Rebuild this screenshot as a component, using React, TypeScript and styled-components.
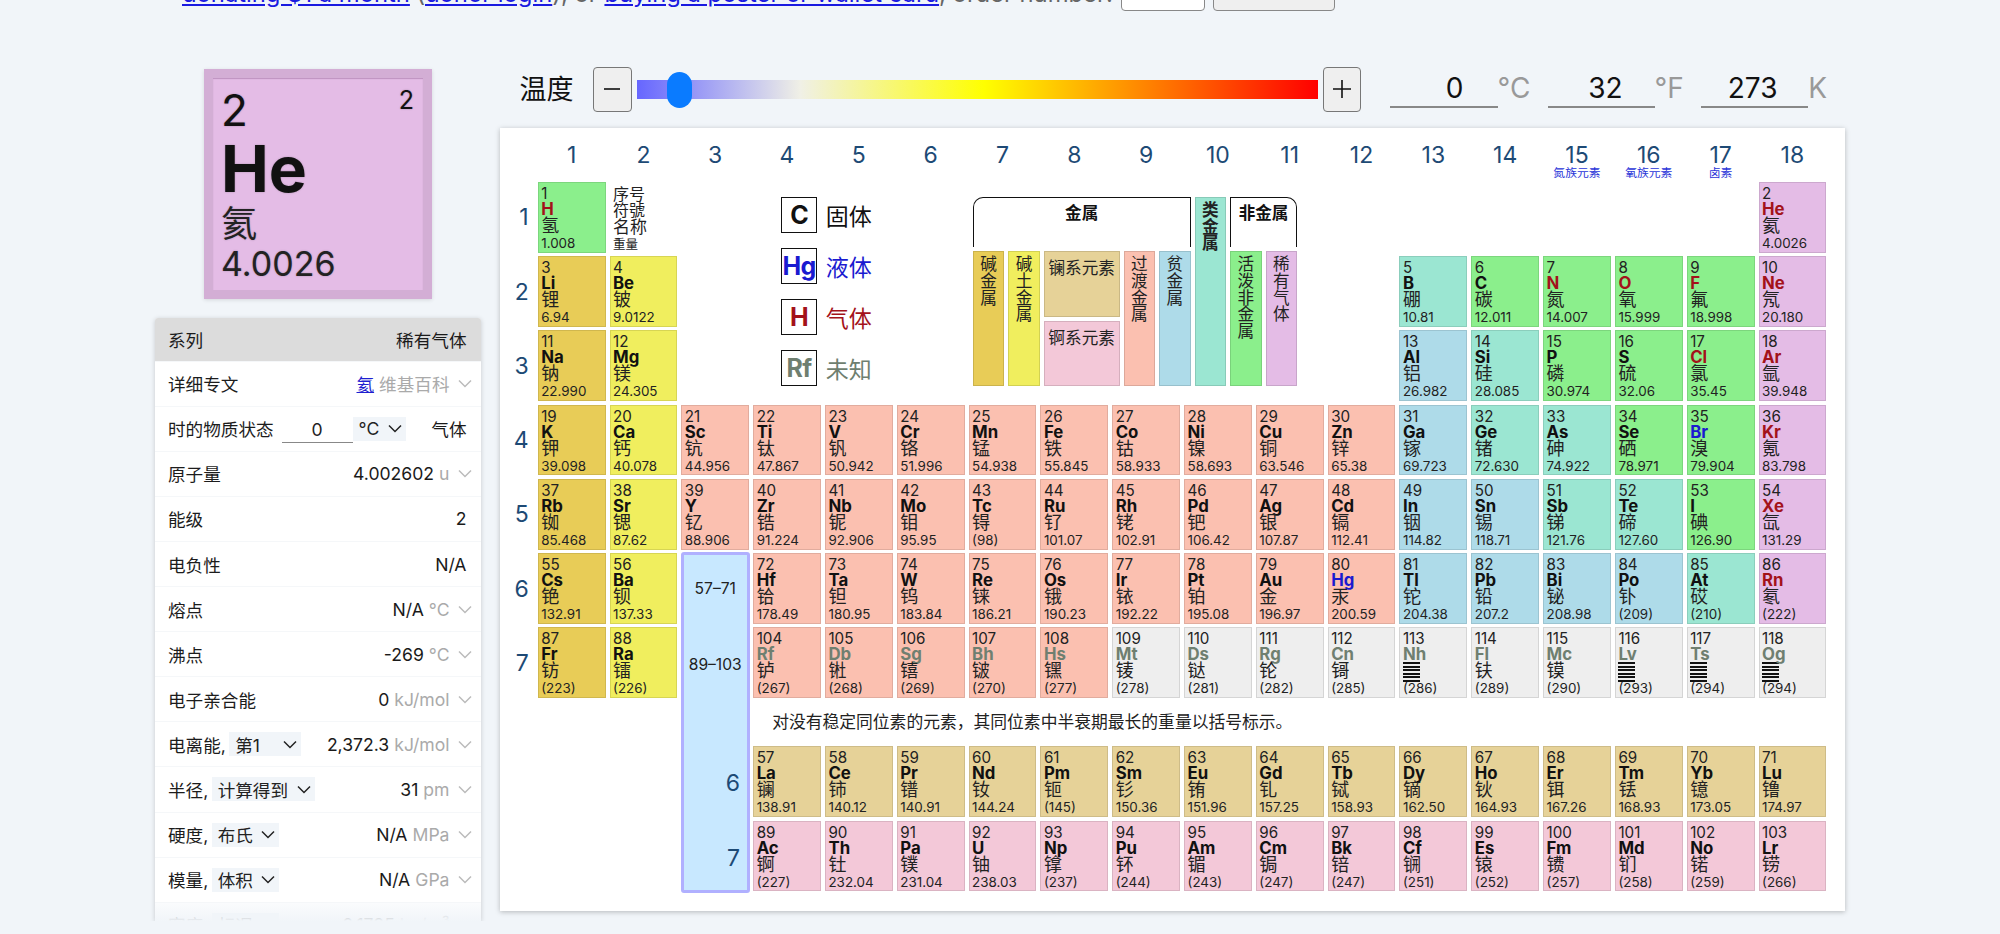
import { createGlobalStyle } from "styled-components";
import styled from "styled-components";

const GlobalStyle = createGlobalStyle`
  html, body {
    margin: 0;
    height: 934px;
    overflow: hidden;
    background: #f1f5f9;
    font-family: Inter, "Noto Sans CJK SC", sans-serif;
    color: #111;
  }
`;

const CAT: Record<string, { bg: string }> = {
  alkali: { bg: "#e8cc57" },
  earth: { bg: "#f0ee5e" },
  trans: { bg: "#fbc0b0" },
  post: { bg: "#aedbe9" },
  metalloid: { bg: "#9be6d2" },
  nonmetal: { bg: "#8bef8c" },
  noble: { bg: "#e4bce6" },
  lan: { bg: "#e6d298" },
  act: { bg: "#f3c8d8" },
  unknown: { bg: "#eeeeee" },
};

const RAW = `H 氢 1.008|He 氦 4.0026|Li 锂 6.94|Be 铍 9.0122|B 硼 10.81|C 碳 12.011|N 氮 14.007|O 氧 15.999|F 氟 18.998|Ne 氖 20.180|Na 钠 22.990|Mg 镁 24.305|Al 铝 26.982|Si 硅 28.085|P 磷 30.974|S 硫 32.06|Cl 氯 35.45|Ar 氩 39.948|K 钾 39.098|Ca 钙 40.078|Sc 钪 44.956|Ti 钛 47.867|V 钒 50.942|Cr 铬 51.996|Mn 锰 54.938|Fe 铁 55.845|Co 钴 58.933|Ni 镍 58.693|Cu 铜 63.546|Zn 锌 65.38|Ga 镓 69.723|Ge 锗 72.630|As 砷 74.922|Se 硒 78.971|Br 溴 79.904|Kr 氪 83.798|Rb 铷 85.468|Sr 锶 87.62|Y 钇 88.906|Zr 锆 91.224|Nb 铌 92.906|Mo 钼 95.95|Tc 锝 (98)|Ru 钌 101.07|Rh 铑 102.91|Pd 钯 106.42|Ag 银 107.87|Cd 镉 112.41|In 铟 114.82|Sn 锡 118.71|Sb 锑 121.76|Te 碲 127.60|I 碘 126.90|Xe 氙 131.29|Cs 铯 132.91|Ba 钡 137.33|La 镧 138.91|Ce 铈 140.12|Pr 镨 140.91|Nd 钕 144.24|Pm 钷 (145)|Sm 钐 150.36|Eu 铕 151.96|Gd 钆 157.25|Tb 铽 158.93|Dy 镝 162.50|Ho 钬 164.93|Er 铒 167.26|Tm 铥 168.93|Yb 镱 173.05|Lu 镥 174.97|Hf 铪 178.49|Ta 钽 180.95|W 钨 183.84|Re 铼 186.21|Os 锇 190.23|Ir 铱 192.22|Pt 铂 195.08|Au 金 196.97|Hg 汞 200.59|Tl 铊 204.38|Pb 铅 207.2|Bi 铋 208.98|Po 钋 (209)|At 砹 (210)|Rn 氡 (222)|Fr 钫 (223)|Ra 镭 (226)|Ac 锕 (227)|Th 钍 232.04|Pa 镤 231.04|U 铀 238.03|Np 镎 (237)|Pu 钚 (244)|Am 镅 (243)|Cm 锔 (247)|Bk 锫 (247)|Cf 锎 (251)|Es 锿 (252)|Fm 镄 (257)|Md 钔 (258)|No 锘 (259)|Lr 铹 (266)|Rf 𬬻 (267)|Db 𬭊 (268)|Sg 𬭳 (269)|Bh 𬭛 (270)|Hs 𬭶 (277)|Mt 鿏 (278)|Ds 𫟼 (281)|Rg 𬬭 (282)|Cn 鿔 (285)|Nh - (286)|Fl 𫓧 (289)|Mc 镆 (290)|Lv - (293)|Ts - (294)|Og - (294)`;

const groupOf = (list: string, sym: string) => list.split(" ").includes(sym);

function category(n: number, sym: string) {
  if (n >= 57 && n <= 71) return "lan";
  if (n >= 89 && n <= 103) return "act";
  if (n >= 109) return "unknown";
  if (groupOf("Li Na K Rb Cs Fr", sym)) return "alkali";
  if (groupOf("Be Mg Ca Sr Ba Ra", sym)) return "earth";
  if (groupOf("Al Ga In Sn Tl Pb Bi Po", sym)) return "post";
  if (groupOf("B Si Ge As Sb Te At", sym)) return "metalloid";
  if (groupOf("H C N O F P S Cl Se Br I", sym)) return "nonmetal";
  if (groupOf("He Ne Ar Kr Xe Rn", sym)) return "noble";
  return "trans";
}

function symbolColor(n: number, sym: string) {
  if (n >= 104) return "#6f7f70";
  if (groupOf("H He N O F Ne Cl Ar Kr Xe Rn", sym)) return "#a3121a";
  if (groupOf("Br Hg", sym)) return "#1a1ad0";
  return "#111";
}

// [row, col] in the table, row 8/9 are the two f-block rows under the note
function place(n: number): [number, number] {
  if (n === 1) return [1, 1];
  if (n === 2) return [1, 18];
  if (n <= 4) return [2, n - 2];
  if (n <= 10) return [2, n + 8];
  if (n <= 12) return [3, n - 10];
  if (n <= 18) return [3, n];
  if (n <= 36) return [4, n - 18];
  if (n <= 54) return [5, n - 36];
  if (n <= 56) return [6, n - 54];
  if (n <= 71) return [8, n - 53];
  if (n <= 86) return [6, n - 68];
  if (n <= 88) return [7, n - 86];
  if (n <= 103) return [9, n - 85];
  return [7, n - 100];
}

const ELEMENTS = RAW.split("|").map((s, i) => {
  const [sym, name, weight] = s.split(" ");
  const n = i + 1;
  return { n, sym, name, weight, cat: category(n, sym), pos: place(n), color: symbolColor(n, sym) };
});

const GROUP_NOTES: Record<number, string> = { 15: "氮族元素", 16: "氧族元素", 17: "卤素" };

const TopBar = styled.div`
  height: 12px;
  overflow: hidden;
  display: flex;
  align-items: flex-end;
  padding-left: 182px;
  font-size: 23.8px;
  line-height: 28px;
  color: #666;
  white-space: pre;
  a { color: #1a1ae0; text-decoration: underline; }
`;

const TopText = styled.span`
  margin-bottom: 4px;
`;

const TopInput = styled.span`
  flex: none;
  width: 84.5px;
  height: 40px;
  margin: 0 8px 1.5px 8px;
  border: 1px solid #888;
  border-radius: 4px;
  background: #fff;
  box-sizing: border-box;
`;

const TopButton = styled.span`
  flex: none;
  width: 122px;
  height: 40px;
  margin-bottom: 1px;
  padding-top: 4px;
  box-sizing: border-box;
  border: 1.5px solid #888;
  border-radius: 4px;
  background: #efefef;
  color: #111;
  font-size: 20px;
  line-height: 24px;
  text-align: center;
`;

const Main = styled.div`
  display: flex;
  gap: 19px;
  padding: 55px 0 0 155px;
  box-sizing: border-box;
`;

const Side = styled.div`
  width: 326px;
  display: flex;
  flex-direction: column;
  align-items: center;
  gap: 19px;
  padding-top: 2px;
`;

const Tile = styled.div`
  width: 228px;
  height: 230px;
  box-sizing: border-box;
  padding: 9.5px 18px 0 17px;
  background: #e4bce6;
  border: 9px solid #d3aed5;
  box-shadow: inset 0 1px 1px rgba(120, 70, 120, 0.35), 0 1px 4px rgba(0, 0, 0, 0.12);
  position: relative;
  text-shadow: 0 0 2px rgba(0, 0, 0, 0.25);
`;

const TileShell = styled.div`
  font-size: 44px;
  line-height: 44px;
  height: 44px;
  margin-left: -9px;
`;

const TileShells = styled.span`
  position: absolute;
  top: 7px;
  right: 9px;
  font-size: 25px;
  line-height: 30px;
`;

const TileSymbol = styled.div`
  font-size: 64px;
  font-weight: 700;
  line-height: 73px;
  margin-left: -9px;
`;

const TileName = styled.div`
  font-size: 36px;
  line-height: 39.5px;
  margin-left: -9px;
  color: #222;
`;

const TileWeight = styled.div`
  font-size: 34px;
  line-height: 40px;
  margin-left: -9px;
  color: #222;
`;

const Panel = styled.div`
  width: 326px;
  height: 603px;
  overflow: hidden;
  position: relative;
  background: #fff;
  border-radius: 3px 3px 0 0;
  box-shadow: 0 1px 5px rgba(0, 0, 0, 0.18);
  clip-path: inset(-8px -8px 0 -8px);
  font-size: 17.6px;
  &::after {
    content: "";
    position: absolute;
    left: -2px;
    right: -2px;
    bottom: 0;
    height: 18px;
    background: linear-gradient(rgba(241, 245, 249, 0.35), #f1f5f9 100%);
  }
`;

const Row = styled.div<{ $head?: boolean }>`
  height: ${(p) => (p.$head ? "43.6px" : "45.1px")};
  box-sizing: border-box;
  display: flex;
  align-items: center;
  justify-content: space-between;
  padding: 0 14.5px 0 13px;
  white-space: nowrap;
  background: ${(p) => (p.$head ? "#dcdcdc" : "#fff")};
  border-bottom: 1.5px solid #f5f7f9;
`;

const Label = styled.span`
  display: flex;
  align-items: center;
  color: #1c1c1c;
`;

const Value = styled.span`
  display: flex;
  align-items: center;
  gap: 5px;
  color: #1a1a1a;
`;

const Unit = styled.span`
  color: #aaa;
`;

const ChevronSvg = styled.svg<{ $dark?: boolean }>`
  width: 14px;
  height: 9px;
  flex: none;
  fill: none;
  stroke: ${(p) => (p.$dark ? "#222" : "#bbb")};
  stroke-width: 1.5;
`;

const Chevron = ({ dark }: { dark?: boolean }) => (
  <ChevronSvg $dark={dark} viewBox="0 0 14 9">
    <polyline points="1,1.5 7,7.5 13,1.5" />
  </ChevronSvg>
);

const MoreIcon = styled.span`
  display: flex;
  margin: 0 -5px 0 3px;
`;

const Link = styled.a`
  color: #1f1fd0;
  text-decoration: underline;
`;

const Pick = styled.span<{ $w: number }>`
  display: inline-flex;
  align-items: center;
  justify-content: space-between;
  width: ${(p) => p.$w}px;
  height: 24px;
  margin-left: 3.4px;
  box-sizing: border-box;
  padding: 0 4px 0 6px;
  background: #f1f5f9;
  color: #222;
`;

const SmallInput = styled.input`
  width: 71px;
  height: 26px;
  margin: 2px -3.4px 0 8px;
  padding: 0;
  box-sizing: border-box;
  border: 0;
  border-bottom: 1.5px solid #888;
  background: transparent;
  text-align: center;
  font: inherit;
  color: #222;
`;

const Content = styled.div`
  width: 1345px;
`;

const Controls = styled.div`
  height: 61px;
  display: flex;
  align-items: flex-start;
`;

const TempLabel = styled.span`
  width: 93px;
  box-sizing: border-box;
  padding-left: 19.5px;
  font-size: 27px;
  line-height: 45px;
`;

const StepButton = styled.button`
  width: 38.5px;
  height: 44.7px;
  padding: 0;
  box-sizing: border-box;
  display: flex;
  align-items: center;
  justify-content: center;
  border: 1.5px solid #777;
  border-radius: 4px;
  background: #efefef;
  color: #111;
`;

const Track = styled.div`
  width: 681px;
  height: 19px;
  margin: 13px 5px 0 5px;
  position: relative;
  background: linear-gradient(90deg, #6666ff 0%, #f0f0e6 24%, #ffff00 51%, #ff0000 100%);
`;

const Thumb = styled.div`
  position: absolute;
  left: 30px;
  top: -8.5px;
  width: 25px;
  height: 36px;
  border-radius: 12.5px;
  background: #0a7bff;
`;

const Temp = styled.div`
  display: flex;
  align-items: flex-start;
  margin-left: 28.5px;
`;

const TempField = styled.label<{ $w: number }>`
  width: ${(p) => p.$w}px;
  display: flex;
  align-items: flex-start;
  font-size: 28px;
  line-height: 36px;
  color: #999;
`;

const TempInput = styled.input<{ $w: number; $shift: number }>`
  width: ${(p) => p.$w}px;
  height: 40.5px;
  padding: 4px ${(p) => Math.max(-p.$shift, 0)}px 0 ${(p) => Math.max(p.$shift, 0)}px;
  box-sizing: border-box;
  border: 0;
  border-bottom: 2px solid #888;
  background: transparent;
  text-align: center;
  font: inherit;
  color: #111;
`;

const TempUnit = styled.span`
  line-height: 42px;
`;

const Card = styled.div`
  height: 783px;
  box-sizing: border-box;
  background: #fff;
  box-shadow: 0 1px 5px rgba(0, 0, 0, 0.25);
  display: grid;
  grid-template-columns: 33.7px repeat(18, 67.82px);
  grid-template-rows: 50.45px repeat(7, 70.7px) 41.3px 70.7px 70.7px;
  gap: 3.55px 4px;
`;

const GroupHead = styled.div<{ $col: number }>`
  grid-column: ${(p) => p.$col + 1};
  grid-row: 1;
  padding-top: 15px;
  text-align: center;
  font-size: 23px;
  line-height: 24px;
  color: #1d4a75;
`;

const GroupNote = styled.div`
  font-size: 11.8px;
  line-height: 12px;
  color: #2a35d8;
  white-space: nowrap;
`;

const Period = styled.div<{ $row: number }>`
  grid-column: 1;
  grid-row: ${(p) => p.$row + 1};
  display: flex;
  align-items: center;
  justify-content: flex-end;
  padding-right: 5px;
  font-size: 23px;
  color: #1d4a75;
`;

const Cell = styled.div<{ $row: number; $col: number; $bg: string }>`
  grid-row: ${(p) => (p.$row > 7 ? p.$row + 2 : p.$row + 1)};
  grid-column: ${(p) => p.$col + 1};
  box-sizing: border-box;
  padding: 3px 0 0 2.5px;
  background: ${(p) => p.$bg};
  border: 1.5px solid rgba(0, 0, 0, 0.1);
  overflow: hidden;
  color: #222;
`;

const Num = styled.div`
  font-size: 15.2px;
  line-height: 15px;
`;

const Sym = styled.div<{ $color: string }>`
  font-size: 16.8px;
  font-weight: 700;
  line-height: 16px;
  color: ${(p) => p.$color};
`;

const Name = styled.div`
  font-size: 18px;
  line-height: 18px;
`;

const Weight = styled.div`
  font-size: 13.4px;
  line-height: 16px;
  white-space: nowrap;
`;

const Bars = styled.div`
  width: 17px;
  height: 21px;
  margin-bottom: -3px;
  background: repeating-linear-gradient(#111 0 2px, transparent 2px 3.5px);
`;

const KeyCell = styled.div`
  grid-row: 2;
  grid-column: 3;
  padding: 5px 0 0 3.5px;
  color: #222;
`;

const KeyLine = styled.div<{ $size: number; $lh: number }>`
  font-size: ${(p) => p.$size}px;
  line-height: ${(p) => p.$lh}px;
`;

const StateLegend = styled.div`
  grid-row: 2 / 5;
  grid-column: 5 / 7;
  display: flex;
  flex-direction: column;
  gap: 15px;
  padding: 15px 0 0 28px;
`;

const StateRow = styled.div<{ $color: string }>`
  display: flex;
  align-items: center;
  gap: 8.5px;
  font-size: 23px;
  color: ${(p) => p.$color};
`;

const StateBox = styled.span`
  width: 36px;
  height: 36px;
  box-sizing: border-box;
  display: flex;
  align-items: center;
  justify-content: center;
  border: 1.5px solid #111;
  font-size: 25px;
  font-weight: 700;
  letter-spacing: -0.5px;
`;

const CatLegend = styled.div`
  grid-row: 2 / 5;
  grid-column: 8 / 14;
  margin: 15px 0 15px 4.3px;
  width: 324px;
  display: grid;
  grid-template-columns: 31.5px 31.5px 75.7px 31.5px 31.5px 31.5px 31.5px 31.5px;
  grid-template-rows: 50.3px 65.4px 65px;
  gap: 4px;
  font-size: 16.6px;
  line-height: 16.7px;
  color: #222;
`;

const Bracket = styled.div<{ $col: string; $side: "left" | "right" }>`
  grid-column: ${(p) => p.$col};
  grid-row: 1;
  box-sizing: border-box;
  border: 1.5px solid #111;
  border-bottom: 0;
  border-${(p) => (p.$side === "left" ? "top-left" : "top-right")}-radius: 10px;
  text-align: center;
  font-weight: 700;
  padding-top: 7px;
  color: #111;
`;

const CatBox = styled.div<{ $col: string; $row: string; $bg: string; $flat?: boolean }>`
  grid-column: ${(p) => p.$col};
  grid-row: ${(p) => p.$row};
  box-sizing: border-box;
  padding: ${(p) => (p.$flat ? "8px 0 0" : "4px 0 0")};
  background: ${(p) => p.$bg};
  border: 1.5px solid rgba(0, 0, 0, 0.12);
  display: flex;
  flex-direction: column;
  align-items: center;
  text-align: center;
  overflow: hidden;
`;

const Stack = styled.span<{ $bold?: boolean }>`
  width: 1em;
  font-weight: ${(p) => (p.$bold ? 700 : 400)};
`;

const Note = styled.div`
  grid-row: 9;
  grid-column: 5 / 20;
  padding: 8px 0 0 19px;
  font-size: 16.8px;
  line-height: 24px;
  color: #222;
`;

const SeriesBox = styled.div`
  grid-column: 4;
  grid-row: 7 / 12;
  margin: -1.5px -0.5px -1.5px;
  box-sizing: border-box;
  background: #c8e8ff;
  border: 3px solid #b0b0ff;
  border-radius: 3px;
  display: grid;
  grid-template-rows: 68.5px 83px 39.5px 74px 76px;
  align-items: center;
  font-size: 15.6px;
  text-align: center;
  color: #222;
`;

const SeriesDigit = styled.div`
  padding-right: 6.5px;
  text-align: right;
  font-size: 23px;
  color: #1d4a75;
`;

const PERIODS = [1, 2, 3, 4, 5, 6, 7];
const GROUPS = Array.from({ length: 18 }, (_, i) => i + 1);

function Element({ e }: { e: (typeof ELEMENTS)[number] }) {
  return (
    <Cell $row={e.pos[0]} $col={e.pos[1]} $bg={CAT[e.cat].bg}>
      <Num>{e.n}</Num>
      <Sym $color={e.color}>{e.sym}</Sym>
      {e.name === "-" ? <Name><Bars /></Name> : <Name>{e.name}</Name>}
      <Weight>{e.weight}</Weight>
    </Cell>
  );
}

function Info({ label, value, unit }: { label: React.ReactNode; value: React.ReactNode; unit?: string }) {
  return (
    <Row>
      <Label>{label}</Label>
      <Value>
        {value}
        {unit && <Unit>{unit}</Unit>}
        <MoreIcon><Chevron /></MoreIcon>
      </Value>
    </Row>
  );
}

export default function App() {
  return (
    <>
      <GlobalStyle />
      <TopBar>
        <TopText>
          <a>donating $1 a month</a> (<a>donor login</a>), or <a>buying a poster or wallet card</a>, order number:
        </TopText>
        <TopInput />
        <TopButton>Hide ads</TopButton>
      </TopBar>
      <Main>
        <Side>
          <Tile>
            <TileShell>2</TileShell>
            <TileShells>2</TileShells>
            <TileSymbol>He</TileSymbol>
            <TileName>氦</TileName>
            <TileWeight>4.0026</TileWeight>
          </Tile>
          <Panel>
            <Row $head>
              <Label>系列</Label>
              <Value>稀有气体</Value>
            </Row>
            <Info label="详细专文" value={<><Link>氦</Link><Unit>维基百科</Unit></>} />
            <Row>
              <Label>
                时的物质状态
                <SmallInput readOnly value="0" />
                <Pick $w={53}>°C <Chevron dark /></Pick>
              </Label>
              <Value>气体</Value>
            </Row>
            <Info label="原子量" value="4.002602" unit="u" />
            <Row><Label>能级</Label><Value>2</Value></Row>
            <Row><Label>电负性</Label><Value>N/A</Value></Row>
            <Info label="熔点" value="N/A" unit="°C" />
            <Info label="沸点" value="-269" unit="°C" />
            <Info label="电子亲合能" value="0" unit="kJ/mol" />
            <Info label={<>电离能,<Pick $w={72}>第1 <Chevron dark /></Pick></>} value="2,372.3" unit="kJ/mol" />
            <Info label={<>半径,<Pick $w={103}>计算得到 <Chevron dark /></Pick></>} value="31" unit="pm" />
            <Info label={<>硬度,<Pick $w={67}>布氏 <Chevron dark /></Pick></>} value="N/A" unit="MPa" />
            <Info label={<>模量,<Pick $w={67}>体积 <Chevron dark /></Pick></>} value="N/A" unit="GPa" />
            <Info label={<>密度,<Pick $w={67}>标况 <Chevron dark /></Pick></>} value="0.1785" unit="kg/m³" />
          </Panel>
        </Side>
        <Content>
          <Controls>
            <TempLabel>温度</TempLabel>
            <StepButton aria-label="minus">
              <svg width="16" height="16" viewBox="0 0 16 16"><path d="M0 8h16" stroke="#111" strokeWidth="1.6" /></svg>
            </StepButton>
            <Track><Thumb /></Track>
            <StepButton aria-label="plus">
              <svg width="18" height="18" viewBox="0 0 18 18"><path d="M0 9h18M9 0v18" stroke="#111" strokeWidth="1.6" /></svg>
            </StepButton>
            <Temp>
              <TempField $w={158}>
                <TempInput readOnly value="0" $w={108} $shift={22} />
                <TempUnit>°C</TempUnit>
              </TempField>
              <TempField $w={153.7}>
                <TempInput readOnly value="32" $w={107} $shift={9} />
                <TempUnit>°F</TempUnit>
              </TempField>
              <TempField $w={130}>
                <TempInput readOnly value="273" $w={107} $shift={-4} />
                <TempUnit>K</TempUnit>
              </TempField>
            </Temp>
          </Controls>
          <Card>
            {GROUPS.map((g) => (
              <GroupHead key={g} $col={g}>
                {g}
                {GROUP_NOTES[g] && <GroupNote>{GROUP_NOTES[g]}</GroupNote>}
              </GroupHead>
            ))}
            {PERIODS.map((p) => <Period key={p} $row={p}>{p}</Period>)}
            {ELEMENTS.map((e) => <Element key={e.n} e={e} />)}
            <KeyCell>
              <KeyLine $size={16} $lh={15}>序号</KeyLine>
              <KeyLine $size={16} $lh={16}>符號</KeyLine>
              <KeyLine $size={17} $lh={19}>名称</KeyLine>
              <KeyLine $size={12.5} $lh={15}>重量</KeyLine>
            </KeyCell>
            <StateLegend>
              <StateRow $color="#111"><StateBox>C</StateBox>固体</StateRow>
              <StateRow $color="#1a1ad0"><StateBox>Hg</StateBox>液体</StateRow>
              <StateRow $color="#a3121a"><StateBox>H</StateBox>气体</StateRow>
              <StateRow $color="#6f7f70"><StateBox>Rf</StateBox>未知</StateRow>
            </StateLegend>
            <CatLegend>
              <Bracket $col="1 / 6" $side="left">金属</Bracket>
              <CatBox $col="6" $row="1 / 4" $bg={CAT.metalloid.bg}><Stack $bold>类金属</Stack></CatBox>
              <Bracket $col="7 / 9" $side="right">非金属</Bracket>
              <CatBox $col="1" $row="2 / 4" $bg={CAT.alkali.bg}><Stack>碱金属</Stack></CatBox>
              <CatBox $col="2" $row="2 / 4" $bg={CAT.earth.bg}><Stack>碱土金属</Stack></CatBox>
              <CatBox $col="3" $row="2" $bg={CAT.lan.bg} $flat>镧系元素</CatBox>
              <CatBox $col="3" $row="3" $bg={CAT.act.bg} $flat>锕系元素</CatBox>
              <CatBox $col="4" $row="2 / 4" $bg={CAT.trans.bg}><Stack>过渡金属</Stack></CatBox>
              <CatBox $col="5" $row="2 / 4" $bg={CAT.post.bg}><Stack>贫金属</Stack></CatBox>
              <CatBox $col="7" $row="2 / 4" $bg={CAT.nonmetal.bg}><Stack>活泼非金属</Stack></CatBox>
              <CatBox $col="8" $row="2 / 4" $bg={CAT.noble.bg}><Stack>稀有气体</Stack></CatBox>
            </CatLegend>
            <Note>对没有稳定同位素的元素，其同位素中半衰期最长的重量以括号标示。</Note>
            <SeriesBox>
              <div>57–71</div>
              <div>89–103</div>
              <div />
              <SeriesDigit>6</SeriesDigit>
              <SeriesDigit>7</SeriesDigit>
            </SeriesBox>
          </Card>
        </Content>
      </Main>
    </>
  );
}
